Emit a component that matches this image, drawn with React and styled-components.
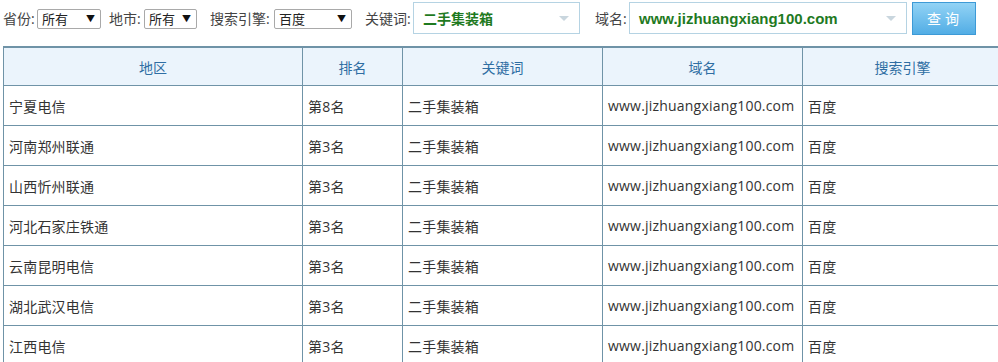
import React from "react";
import styled, { createGlobalStyle } from "styled-components";

const GlobalStyle = createGlobalStyle`
  body {
    margin: 0;
    background: #fff;
    font-family: "Open Sans", "Noto Sans CJK SC", sans-serif;
    font-size: 13px;
    color: #333;
  }
`;

const Page = styled.div`
  padding: 0 0 0 3px;
  width: 1000px;
`;

const Toolbar = styled.div`
  display: flex;
  align-items: center;
  height: 36px;
  margin-bottom: 10px;
`;

const Label = styled.span`
  display: inline-block;
  width: ${({ $w }) => $w}px;
  font-size: 14px;
  color: #444;
  white-space: nowrap;
  margin-left: ${({ $gap }) => $gap || 0}px;
`;

const Select = styled.div`
  display: flex;
  align-items: center;
  justify-content: space-between;
  box-sizing: border-box;
  width: ${({ $w }) => $w}px;
  height: 20px;
  border: 1px solid #a9a9a9;
  border-radius: 2px;
  padding: 0 5px 0 4px;
  font-size: 13px;
  color: #222;
  background: #fff;
  margin-top: 1px;
`;

const Caret = styled.span`
  font-size: 9px;
  color: #111;
`;

const Combo = styled.div`
  display: flex;
  align-items: center;
  justify-content: space-between;
  box-sizing: border-box;
  width: ${({ $w }) => $w}px;
  height: 32px;
  border: 1px solid #b5d3e3;
  padding: 0 10px 0 9px;
  font-family: "Liberation Sans", "Noto Sans CJK SC", sans-serif;
  font-size: ${({ $size }) => $size || 14}px;
  font-weight: bold;
  color: #1f7a1f;
  background: #fff;
`;

const ComboArrow = styled.span`
  width: 0;
  height: 0;
  border-left: 5px solid transparent;
  border-right: 5px solid transparent;
  border-top: 5px solid #c9d6de;
`;

const Button = styled.button`
  box-sizing: border-box;
  width: 64px;
  height: 33px;
  margin-left: 5px;
  border: 1px solid #3d9ad6;
  background: linear-gradient(#92d3f5, #52ade5);
  color: #fff;
  font-family: inherit;
  font-size: 14px;
  letter-spacing: 4px;
  padding-left: 8px;
`;

const Table = styled.table`
  border-collapse: collapse;
  table-layout: fixed;
  width: 1000px;
  font-size: 14px;
`;

const Th = styled.th`
  width: ${({ $w }) => $w}px;
  height: 37px;
  border: 1px solid #6f93a7;
  border-top-width: 2px;
  background: #ebf4fc;
  color: #2f6ea3;
  font-weight: normal;
  padding: 0;
`;

const Td = styled.td`
  height: 39px;
  border: 1px solid #6f93a7;
  padding: 0 0 0 5px;
  color: #333;
  white-space: nowrap;
  letter-spacing: 0.2px;
`;

const rows = [
  "宁夏电信",
  "河南郑州联通",
  "山西忻州联通",
  "河北石家庄铁通",
  "云南昆明电信",
  "湖北武汉电信",
  "江西电信",
];

export default function App() {
  return (
    <Page>
      <GlobalStyle />
      <Toolbar>
        <Label $w={34}>省份:</Label>
        <Select $w={64}>
          所有 <Caret>▼</Caret>
        </Select>
        <Label $gap={8} $w={35}>地市:</Label>
        <Select $w={53}>
          所有 <Caret>▼</Caret>
        </Select>
        <Label $gap={13} $w={64}>搜索引擎:</Label>
        <Select $w={78}>
          百度 <Caret>▼</Caret>
        </Select>
        <Label $gap={13} $w={48}>关键词:</Label>
        <Combo $w={167}>
          二手集装箱 <ComboArrow />
        </Combo>
        <Label $gap={15} $w={34}>域名:</Label>
        <Combo $w={278} $size={15}>
          www.jizhuangxiang100.com <ComboArrow />
        </Combo>
        <Button>查询</Button>
      </Toolbar>
      <Table>
        <thead>
          <tr>
            <Th $w={298}>地区</Th>
            <Th $w={99}>排名</Th>
            <Th $w={199}>关键词</Th>
            <Th $w={199}>域名</Th>
            <Th>搜索引擎</Th>
          </tr>
        </thead>
        <tbody>
          {rows.map((r, i) => (
            <tr key={i}>
              <Td>{r}</Td>
              <Td>{i === 0 ? "第8名" : "第3名"}</Td>
              <Td>二手集装箱</Td>
              <Td>www.jizhuangxiang100.com</Td>
              <Td>百度</Td>
            </tr>
          ))}
        </tbody>
      </Table>
    </Page>
  );
}
